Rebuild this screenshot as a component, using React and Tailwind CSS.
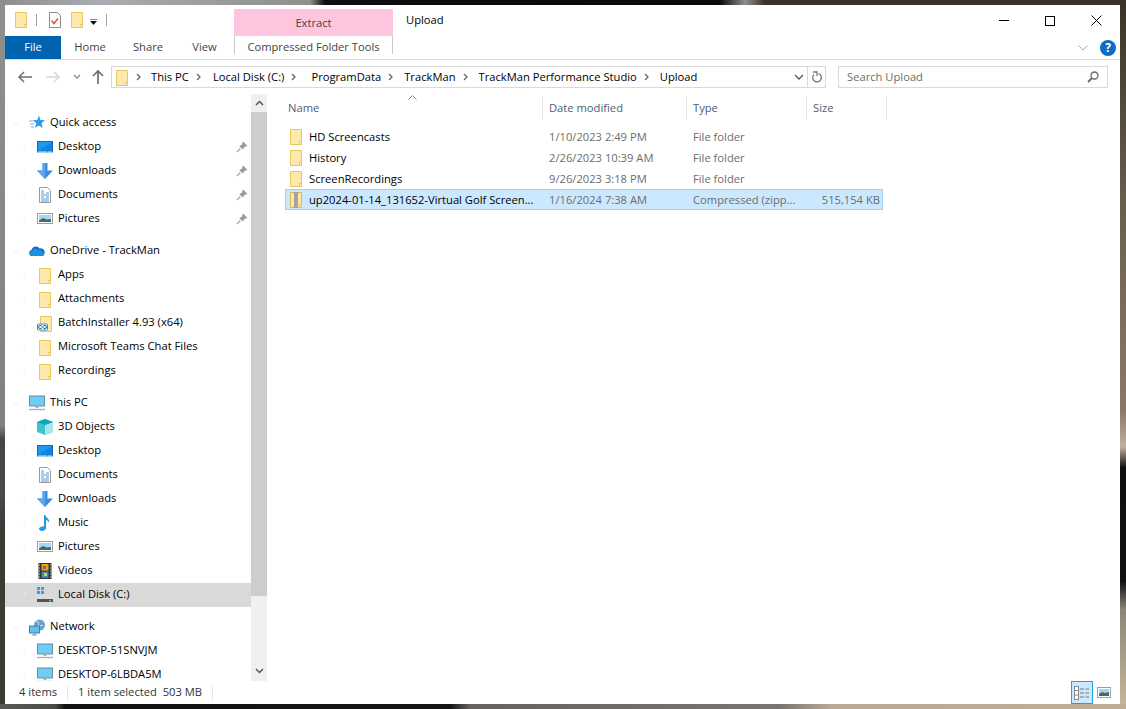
import React from "react";

const Folder = ({ className = "" }) => (
  <svg width="14" height="17" viewBox="0 0 14 17" className={`shrink-0 ${className}`}>
    <path d="M1.500 1.500h11v15h-11z" fill="#fde9ac" stroke="#e9c75c" />
    <path d="M10.500 16.500v-3h2v3z" fill="#fff6d6" stroke="#e9c75c" />
  </svg>
);

const ZipFolder = () => (
  <svg width="14" height="17" viewBox="0 0 14 17" className="shrink-0">
    <path d="M1.500 1.500h11v15h-11z" fill="#fde7a3" stroke="#d8b751" />
    <path d="M10.500 16.500v-3h2v3z" fill="#fff3c8" stroke="#e8c34e" />
    <path d="M5.500 1.500h3v15h-3z" fill="#e2e2e2" stroke="#a0a0a0" />
    <path d="M6 3h2M6 5h2M6 7h2M6 9h2M6 11h2M6 13h2M6 15h2" stroke="#666" strokeWidth="1" />
  </svg>
);

const Desktop = () => (
  <svg width="16" height="16" viewBox="0 0 16 16" className="shrink-0">
    <rect x="0.500" y="2.500" width="15" height="10.500" fill="#1e9bf0" stroke="#0a6ec4" />
    <path d="M1 11.500 15 3v9H1z" fill="#0f86e2" />
    <path d="M1 13h14" stroke="#fff" strokeWidth="0.800" strokeDasharray="9 1 4" />
  </svg>
);

const Download = () => (
  <svg width="16" height="16" viewBox="0 0 16 16" className="shrink-0">
    <path d="M5.500 0h5v7.500H16L8 16 0 7.500h5.500z" fill="#3b8de0" />
    <path d="M5.500 0h2.500v16L0 7.500h5.500z" fill="#5ea6ec" />
  </svg>
);

const Docs = () => (
  <svg width="16" height="16" viewBox="0 0 16 16" className="shrink-0">
    <path d="M2.500.500h8l3 3v12h-11z" fill="#fff" stroke="#9a9a9a" />
    <path d="M4 4h3M4 6h3M9 6h3M4 8h8M4 10h3M9 10h3M4 12h8M4 14h8" stroke="#3a8fd8" strokeWidth="0.900" />
  </svg>
);

const Picture = () => (
  <svg width="16" height="16" viewBox="0 0 16 16" className="shrink-0">
    <rect x="0.500" y="2.500" width="15" height="10" fill="#fff" stroke="#9e9e9e" />
    <rect x="2" y="4" width="12" height="7" fill="#a9d4f0" />
    <path d="M2 9.500 6 7l4 1.500L14 8v3H2z" fill="#3d6b72" />
  </svg>
);

const Pin = () => (
  <svg width="12" height="12" viewBox="0 0 12 12" className="shrink-0">
    <path d="M7 .500 11.500 5l-1.200.600L8.500 5.800 6.800 8.600 3.400 5.200l2.800-1.700.200-1.800z" fill="#8f9aa3" />
    <path d="M4.300 7.700.800 11.200" stroke="#8f9aa3" strokeWidth="1.200" />
  </svg>
);

const Star = () => (
  <svg width="16" height="16" viewBox="0 0 16 16" className="shrink-0">
    <path d="M10 .500l1.500 4.500 4.500.300-3.500 3 1.200 4.700-3.900-2.600L6 13l1.300-4.700-3.500-3 4.500-.300z" fill="#2f9ae8" />
    <path d="M0 6h4M1 9h4M2 12h3" stroke="#6fb5ea" strokeWidth="1.200" />
  </svg>
);

const Cloud = () => (
  <svg width="16" height="16" viewBox="0 0 16 16" className="shrink-0">
    <path d="M3 13a3 3 0 0 1-.6-5.900A4.500 4.500 0 0 1 10.600 5.600 3.600 3.600 0 0 1 12.900 13z" fill="#0a6fc9" />
    <path d="M3 13a2.500 2.500 0 0 1 .2-5 3.400 3.400 0 0 1 6-1.200 3 3 0 0 1 4.200 2.400A2 2 0 0 1 14 13z" fill="#1f8fe0" />
  </svg>
);

const LinkFolder = () => (
  <svg width="16" height="17" viewBox="0 0 16 17" className="shrink-0">
    <path d="M3.500 1.500h11v15h-11z" fill="#fde9ac" stroke="#e9c75c" />
    <rect x="0.500" y="9" width="10" height="6" rx="1" fill="#fff" stroke="#1a6fb5" strokeWidth="0.800" />
    <path d="M4.500 10.500H3a1.500 1.500 0 0 0 0 3h1.500M6.500 10.500H8a1.500 1.500 0 0 1 0 3H6.500M4 12h3" stroke="#1a6fb5" strokeWidth="1" fill="none" />
  </svg>
);

const Pc = () => (
  <svg width="16" height="16" viewBox="0 0 16 16" className="shrink-0">
    <rect x="0.500" y="1" width="15" height="10" fill="#6fcdf5" stroke="#6b8ea3" />
    <path d="M6.500 11h3v2h-3z" fill="#a9b4bb" />
    <path d="M0 14.500h16" stroke="#a6b2ba" strokeWidth="1.400" />
  </svg>
);

const Cube = () => (
  <svg width="16" height="16" viewBox="0 0 16 16" className="shrink-0">
    <path d="M8 0l8 3v10l-8 3-8-3V3z" fill="#3cc3cf" />
    <path d="M8 6v10l8-3V3z" fill="#a7e6ea" />
    <path d="M0 3l8 3 8-3-8-3z" fill="#0fa5b5" />
  </svg>
);

const Music = () => (
  <svg width="16" height="16" viewBox="0 0 16 16" className="shrink-0">
    <path d="M7 0h1.500c.3 3 4.500 3.500 3.500 8-.5-2-2-3-3-3v8c0 2-2 3-4 3s-3-1-3-2.200S4 11 7 11.500z" fill="#1d9be8" />
  </svg>
);

const Video = () => (
  <svg width="16" height="16" viewBox="0 0 16 16" className="shrink-0">
    <rect x="1.500" y="0" width="13" height="16" fill="#333" />
    <rect x="4.500" y="1" width="7" height="6.500" fill="#d8a928" />
    <rect x="4.500" y="8.500" width="7" height="6.500" fill="#2f8fc4" />
    <path d="M6 3h3v3H6z" fill="#c94b2c" />
    <path d="M7 10h3v3H7z" fill="#e8c34e" />
    <path d="M2.500 1.500v13M13.500 1.500v13" stroke="#ddd" strokeWidth="1" strokeDasharray="1 2" />
  </svg>
);

const Disk = () => (
  <svg width="16" height="16" viewBox="0 0 16 16" className="shrink-0">
    <path d="M0 0h3v3H0zM4 0h3v3H4zM0 4h3v3H0zM4 4h3v3H4z" fill="#1ea7ec" />
    <path d="M3 8h10l3 4H0z" fill="#dcdcdc" />
    <rect x="0" y="12" width="16" height="3" fill="#555" />
    <rect x="12" y="13" width="2" height="1.500" fill="#5fd35f" />
  </svg>
);

const Network = () => (
  <svg width="16" height="17" viewBox="0 0 16 17" className="shrink-0">
    <circle cx="10.500" cy="6" r="5.500" fill="#6c9fc9" />
    <path d="M7 2c2 0 3 2 2.500 3.500S12 7 14 6" stroke="#d5e6f3" fill="none" />
    <rect x="0.500" y="7" width="10" height="7" fill="#5cc0ef" stroke="#4b7d9e" />
    <path d="M3 16h5M5.500 14v2" stroke="#7a97a9" />
  </svg>
);

const Chevron = () => (
  <svg width="8" height="8" viewBox="0 0 8 8" className="shrink-0">
    <path d="M2.500 1 5.500 4l-3 3" fill="none" stroke="#f0f0f0" />
  </svg>
);

const ChevronDown = () => (
  <svg width="10" height="8" viewBox="0 0 10 8" className="shrink-0">
    <path d="M1 2l4 4 4-4" fill="none" stroke="#f0f0f0" />
  </svg>
);

const Crumb = () => (
  <svg width="6" height="8" viewBox="0 0 6 8" className="mx-[7px] mt-px shrink-0">
    <path d="M1 1l3 3-3 3" fill="none" stroke="#666" strokeWidth="1.300" />
  </svg>
);

const NavHead = ({ icon, label }) => (
  <div className="flex h-6 items-center pl-[6px]">
    <ChevronDown />
    <span className="ml-[8px] flex w-4 justify-center">{icon}</span>
    <span className="ml-[5px] pb-[2px] text-black">{label}</span>
  </div>
);

const NavItem = ({ icon, label, pinned, active }) => (
  <div className={`flex h-6 items-center pl-[16px] ${active ? "bg-[#d9d9d9]" : ""}`}>
    <Chevron />
    <span className="ml-[8px] flex w-4 justify-center">{icon}</span>
    <span className="ml-[5px] flex-1 pb-[2px] text-black">{label}</span>
    {pinned && <span className="mr-[3px]"><Pin /></span>}
  </div>
);

const rows = [
  { name: "HD Screencasts", date: "1/10/2023 2:49 PM", type: "File folder", size: "" },
  { name: "History", date: "2/26/2023 10:39 AM", type: "File folder", size: "" },
  { name: "ScreenRecordings", date: "9/26/2023 3:18 PM", type: "File folder", size: "" },
  { name: "up2024-01-14_131652-Virtual Golf Screen...", date: "1/16/2024 7:38 AM", type: "Compressed (zipp...", size: "515,154 KB", zip: true },
];

export default function App() {
  return (
    <div className="h-[709px] w-[1126px] overflow-hidden bg-[#3a3a3a] [background:linear-gradient(90deg,#8c8e8f_0,#a9adb1_100px,#8e8f8d_310px,#0d0d0f_325px,#0a0a0c_720px,#8f8f8c_745px,#3a332a_765px,#3a332a_1126px)_top/100%_5px_no-repeat,linear-gradient(90deg,#5a5a56_0,#4a4a46_55px,#121212_65px,#141414_450px,#66625e_470px,#7a7570_780px,#b8a894_830px,#c0ae98_1126px)_bottom/100%_5px_no-repeat,linear-gradient(180deg,#8e9090_0,#808282_60%,#454545_62%,#4a4a4a_70%,#3e3a36_74%,#3e3a36_100%)_left/5px_100%_no-repeat,linear-gradient(180deg,#3a3428_0,#6a6050_30%,#8a7868_58%,#c0b0a0_63%,#0e0e0e_66%,#111_82%,#8a8678_86%,#c8b89c_100%)_right/6px_100%_no-repeat] pb-[5px] pl-[5px] pr-[6px] pt-[5px] font-['Open_Sans',sans-serif] text-[11.2px] leading-4">
      <div className="flex h-[699px] flex-col bg-white">
        {/* title bar */}
        <div className="flex h-[31px] shrink-0">
          <div className="flex w-[229px] items-start pl-[9px] pt-[6px]">
            <Folder />
            <div className="ml-[8px] mt-[3px] h-3 w-px bg-[#a0a0a0]" />
            <svg width="14" height="17" viewBox="0 0 14 17" className="ml-[11px]">
              <path d="M1.500 1.500h8l3 3v12h-11z" fill="#fff" stroke="#8a8a8a" />
              <path d="M3.500 9.500l2.500 3 4-5" fill="none" stroke="#e0562a" strokeWidth="1.500" />
            </svg>
            <Folder className="ml-[8px]" />
            <svg width="8" height="6" viewBox="0 0 8 6" className="ml-[6px] mt-[8px]">
              <path d="M0 0h7" stroke="#111" />
              <path d="M0 2h7L3.500 6z" fill="#111" />
            </svg>
            <div className="ml-[8px] mt-[3px] h-3 w-px bg-[#a0a0a0]" />
          </div>
          <div className="mt-[4px] flex w-[159px] items-center justify-center bg-[#fec5de] text-[#444]">Extract</div>
          <div className="ml-[13px] pt-[7px] text-black">Upload</div>
          <div className="ml-auto mr-px flex">
            <div className="flex h-[31px] w-[46px] items-center justify-center">
              <div className="h-px w-[10px] bg-black" />
            </div>
            <div className="flex h-[31px] w-[46px] items-center justify-center">
              <div className="h-[10px] w-[10px] border border-black" />
            </div>
            <div className="flex h-[31px] w-[46px] items-center justify-center">
              <svg width="11" height="11" viewBox="0 0 11 11">
                <path d="M.500.500l10 10M10.500.500l-10 10" stroke="#000" />
              </svg>
            </div>
          </div>
        </div>

        {/* ribbon tabs */}
        <div className="flex h-6 shrink-0 border-b border-[#dadada] text-[#444]">
          <div className="flex h-[23px] w-14 items-center justify-center bg-[#0063b1] pb-px text-white">File</div>
          <div className="flex h-[23px] w-[58px] items-center justify-center pb-px">Home</div>
          <div className="flex h-[23px] w-[58px] items-center justify-center pb-px">Share</div>
          <div className="flex h-[23px] w-[55px] items-center justify-center pb-px">View</div>
          <div className="ml-[2px] flex h-[18px] w-[159px] items-start justify-center border-x border-[#c8c8c8] pt-[3px]">
            <span className="whitespace-nowrap">Compressed Folder Tools</span>
          </div>
          <div className="ml-auto flex items-center pr-[4px]">
            <svg width="10" height="6" viewBox="0 0 10 6" className="mr-[12px]">
              <path d="M.500.500 5 5 9.500.500" fill="none" stroke="#a8a8a8" />
            </svg>
            <div className="flex h-4 w-4 items-center justify-center rounded-full bg-[#0a6cc4] text-[12px] font-bold text-white">?</div>
          </div>
        </div>

        {/* address row */}
        <div className="flex h-[34px] shrink-0 items-start pl-[12px] pt-[6px]">
          <div className="flex h-[22px] w-[94px] items-center">
            <svg width="16" height="16" viewBox="0 0 16 16">
              <path d="M15 8H2M7 3 2 8l5 5" fill="none" stroke="#6e6e6e" strokeWidth="1.500" />
            </svg>
            <svg width="16" height="16" viewBox="0 0 16 16" className="ml-[12px]">
              <path d="M1 8h13M9 3l5 5-5 5" fill="none" stroke="#d6d6d6" strokeWidth="1.500" />
            </svg>
            <svg width="8" height="6" viewBox="0 0 8 6" className="ml-[12px]">
              <path d="M1 1l3 3 3-3" fill="none" stroke="#8a8a8a" strokeWidth="1.300" />
            </svg>
            <svg width="16" height="16" viewBox="0 0 16 16" className="ml-[9px]">
              <path d="M8 15V2M3 7l5-5 5 5" fill="none" stroke="#6e6e6e" strokeWidth="1.700" />
            </svg>
          </div>
          <div className="flex h-[22px] w-[715px] items-center border border-[#d9d9d9]">
            <Folder className="ml-[3px]" />
            <div className="flex items-center pb-px text-black">
              <Crumb /><span className="ml-[2px]">This PC</span>
              <Crumb /><span className="ml-[4px]">Local Disk (C:)</span>
              <Crumb /><span className="ml-[7px]">ProgramData</span>
              <Crumb /><span className="ml-[3px]">TrackMan</span>
              <Crumb /><span className="ml-[3px]">TrackMan Performance Studio</span>
              <Crumb /><span className="ml-[3px]">Upload</span>
            </div>
            <div className="ml-auto flex h-full items-center">
              <svg width="10" height="7" viewBox="0 0 10 7" className="mr-[3px]">
                <path d="M1 1l4 4 4-4" fill="none" stroke="#555" strokeWidth="1.300" />
              </svg>
              <div className="flex h-full w-[18px] items-center justify-center border-l border-[#d9d9d9]">
                <svg width="12" height="13" viewBox="0 0 12 13">
                  <path d="M7.500 2.500A4.300 4.300 0 1 1 3 3.500" fill="none" stroke="#777" strokeWidth="1.300" />
                  <path d="M2 1h4v4" fill="none" stroke="#777" strokeWidth="1.300" />
                </svg>
              </div>
            </div>
          </div>
          <div className="ml-[12px] flex h-[22px] w-[270px] items-center justify-between border border-[#d9d9d9] pl-[8px] pr-[8px] text-[#6d6d6d]">
            <span className="pb-px">Search Upload</span>
            <svg width="12" height="12" viewBox="0 0 12 12">
              <circle cx="7.500" cy="4.500" r="3.500" fill="none" stroke="#666" strokeWidth="1.300" />
              <path d="M5 7 1 11" stroke="#666" strokeWidth="1.800" />
            </svg>
          </div>
        </div>

        {/* body */}
        <div className="flex h-[587px] shrink-0">
          <div className="flex w-[246px] flex-col gap-2 overflow-hidden pt-[17px]">
            <div>
              <NavHead icon={<Star />} label="Quick access" />
              <NavItem icon={<Desktop />} label="Desktop" pinned />
              <NavItem icon={<Download />} label="Downloads" pinned />
              <NavItem icon={<Docs />} label="Documents" pinned />
              <NavItem icon={<Picture />} label="Pictures" pinned />
            </div>
            <div>
              <NavHead icon={<Cloud />} label="OneDrive - TrackMan" />
              <NavItem icon={<Folder />} label="Apps" />
              <NavItem icon={<Folder />} label="Attachments" />
              <NavItem icon={<LinkFolder />} label="BatchInstaller 4.93 (x64)" />
              <NavItem icon={<Folder />} label="Microsoft Teams Chat Files" />
              <NavItem icon={<Folder />} label="Recordings" />
            </div>
            <div>
              <NavHead icon={<Pc />} label="This PC" />
              <NavItem icon={<Cube />} label="3D Objects" />
              <NavItem icon={<Desktop />} label="Desktop" />
              <NavItem icon={<Docs />} label="Documents" />
              <NavItem icon={<Download />} label="Downloads" />
              <NavItem icon={<Music />} label="Music" />
              <NavItem icon={<Picture />} label="Pictures" />
              <NavItem icon={<Video />} label="Videos" />
              <NavItem icon={<Disk />} label="Local Disk (C:)" active />
            </div>
            <div>
              <NavHead icon={<Network />} label="Network" />
              <NavItem icon={<Pc />} label="DESKTOP-51SNVJM" />
              <NavItem icon={<Pc />} label="DESKTOP-6LBDA5M" />
            </div>
          </div>

          {/* nav scrollbar */}
          <div className="flex w-[16px] flex-col bg-[#f0f0f0]">
            <div className="flex h-[18px] items-center justify-center">
              <svg width="9" height="6" viewBox="0 0 9 6">
                <path d="M1 5l3.500-3.500L8 5" fill="none" stroke="#555" strokeWidth="1.500" />
              </svg>
            </div>
            <div className="h-[484px] bg-[#cdcdcd]" />
            <div className="mb-[1px] mt-auto flex h-[18px] items-center justify-center">
              <svg width="9" height="6" viewBox="0 0 9 6">
                <path d="M1 1l3.500 3.500L8 1" fill="none" stroke="#555" strokeWidth="1.500" />
              </svg>
            </div>
          </div>

          {/* file list */}
          <div className="relative flex-1 pl-[18px] pt-[2px]">
            <svg width="9" height="5" viewBox="0 0 9 5" className="absolute left-[141px] top-[1px]">
              <path d="M.500 4.500 4.500.500l4 4" fill="none" stroke="#8a8a8a" />
            </svg>
            <div className="grid h-6 w-[602px] grid-cols-[258px_144px_120px_80px] text-[#4c607a]">
              <div className="flex items-center border-r border-[#e5e5e5] pl-[3px]">Name</div>
              <div className="flex items-center border-r border-[#e5e5e5] pl-[6px]">Date modified</div>
              <div className="flex items-center border-r border-[#e5e5e5] pl-[6px]">Type</div>
              <div className="flex items-center border-r border-[#e5e5e5] pl-[6px]">Size</div>
            </div>
            <div className="mt-[6px] w-[598px]">
              {rows.map((row) => (
                <div
                  key={row.name}
                  className={`grid h-[21px] grid-cols-[258px_144px_119px_77px] items-center border ${row.zip ? "border-[#99d1ff] bg-[#cce8ff]" : "border-transparent"}`}
                >
                  <div className="flex items-center whitespace-nowrap pl-[3px] text-black">
                    {row.zip ? <ZipFolder /> : <Folder />}
                    <span className="ml-[6px]">{row.name}</span>
                  </div>
                  <div className="whitespace-nowrap pl-[5px] text-[#6d6d6d]">{row.date}</div>
                  <div className="whitespace-nowrap pl-[5px] text-[#6d6d6d]">{row.type}</div>
                  <div className="whitespace-nowrap pr-[4px] text-right text-[#6d6d6d]">{row.size}</div>
                </div>
              ))}
            </div>
          </div>
        </div>

        {/* status bar */}
        <div className="flex h-[23px] shrink-0 items-center text-[#333]">
          <span className="ml-[14px] w-[48px] pb-px">4 items</span>
          <div className="h-4 w-px bg-[#e6e6e6]" />
          <span className="ml-[10px] w-[134px] whitespace-nowrap pb-px">1 item selected&nbsp;&nbsp;503 MB</span>
          <div className="h-4 w-px bg-[#e6e6e6]" />
          <div className="ml-auto flex items-center pr-[9px]">
            <div className="flex h-[23px] w-[22px] items-center justify-center border border-[#26a0da] bg-[#cce8ff]">
              <svg width="16" height="14" viewBox="0 0 16 14">
                <rect x="0.500" y="0.500" width="4" height="13" fill="#fff" stroke="#8a8a8a" />
                <path d="M1 4.500h3M1 9h3" stroke="#8a8a8a" />
                <path d="M6 3h4M11.500 3H15M6 7h4M11.500 7H15M6 11h4M11.500 11H15" stroke="#7a7a7a" />
              </svg>
            </div>
            <div className="ml-[4px] flex h-[23px] w-[14px] items-center justify-center">
              <svg width="14" height="11" viewBox="0 0 14 11">
                <rect x="0.500" y="0.500" width="13" height="10" fill="#fff" stroke="#a0a0a0" />
                <rect x="2" y="2" width="10" height="7" fill="#a9d4f0" />
                <path d="M2 7l3-2 3 1 4-1v4H2z" fill="#3d6b72" />
              </svg>
            </div>
          </div>
        </div>
      </div>
    </div>
  );
}
